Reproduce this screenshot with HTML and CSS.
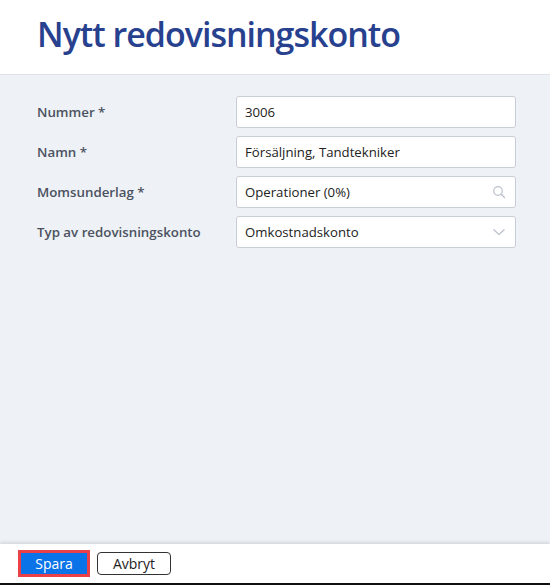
FILE: index.html
```html
<!DOCTYPE html>
<html lang="sv">
<head>
  <meta charset="UTF-8">
  <title>Nytt redovisningskonto</title>
  <link rel="stylesheet" href="styles.css">
</head>
<body>
  <div class="page">
    <header class="top">
      <h1>Nytt redovisningskonto</h1>
    </header>

    <main class="form">
      <div class="row">
        <label>Nummer *</label>
        <div class="field">3006</div>
      </div>
      <div class="row">
        <label>Namn *</label>
        <div class="field">Försäljning, Tandtekniker</div>
      </div>
      <div class="row">
        <label>Momsunderlag *</label>
        <div class="field">
          <span>Operationer (0%)</span>
          <svg class="icon" width="14" height="14" viewBox="0 0 14 14">
            <circle cx="6" cy="6" r="4.3" fill="none" stroke="#b9bfc9" stroke-width="1.2"/>
            <path d="M9.2 9.2 L12.5 12.5" stroke="#b9bfc9" stroke-width="1.3" stroke-linecap="round"/>
          </svg>
        </div>
      </div>
      <div class="row">
        <label>Typ av redovisningskonto</label>
        <div class="field">
          <span>Omkostnadskonto</span>
          <svg class="icon" width="14" height="14" viewBox="0 0 14 14">
            <path d="M1.5 4.5 L7 9.5 L12.5 4.5" fill="none" stroke="#b9bfc9" stroke-width="1.2"/>
          </svg>
        </div>
      </div>
    </main>

    <footer class="actions">
      <button class="btn primary">Spara</button>
      <button class="btn">Avbryt</button>
    </footer>
  </div>
</body>
</html>
```

FILE: styles.css
```css
html, body {
  margin: 0;
  height: 100%;
}

body {
  font-family: "Open Sans", "Noto Sans", sans-serif;
  background: #fff;
  color: #222;
}

.page {
  height: 583px;
  display: flex;
  flex-direction: column;
  border-bottom: 2px solid #111;
}

.top {
  height: 75px;
  box-sizing: border-box;
  padding: 9px 37px 0;
  border-bottom: 1px solid #dfe3e9;
}

.top h1 {
  margin: 0;
  font-size: 34px;
  line-height: 50px;
  font-weight: 600;
  color: #27418f;
  letter-spacing: -1px;
}

.form {
  flex: 1;
  background: #eef1f6;
  padding: 21px 34px 0 37px;
  display: flex;
  flex-direction: column;
  gap: 8px;
}

.row {
  display: flex;
  align-items: center;
}

.row label {
  width: 199px;
  font-size: 13.3px;
  font-weight: 600;
  color: #4b5160;
}

.field {
  width: 280px;
  height: 32px;
  box-sizing: border-box;
  background: #fff;
  border: 1px solid #c8ced8;
  border-radius: 3px;
  padding: 0 9px 0 8px;
  display: flex;
  align-items: center;
  justify-content: space-between;
  font-size: 13.2px;
  color: #222;
}

.icon {
  flex: none;
}

.actions {
  height: 39px;
  background: #fff;
  padding: 0 18px;
  display: flex;
  align-items: center;
  gap: 7px;
  box-shadow: 0 -2px 3px rgba(0, 0, 0, 0.1);
}

.btn {
  font-family: "Open Sans", "Noto Sans", sans-serif;
  font-size: 14px;
  height: 23px;
  width: 74px;
  padding: 0;
  background: #fff;
  color: #222;
  border: 1px solid #333;
  border-radius: 4px;
}

.btn.primary {
  width: 72px;
  height: 27px;
  background: #0a73e8;
  color: #fff;
  border: 3px solid #ec4049;
  border-radius: 0;
}
```
